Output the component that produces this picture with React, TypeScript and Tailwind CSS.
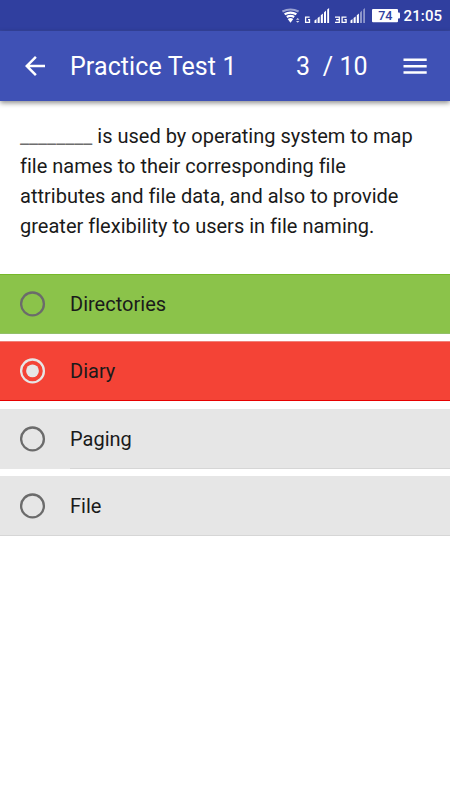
import React from 'react';
import clsx from 'clsx';

const options = [
  { label: 'Directories', state: 'correct' },
  { label: 'Diary', state: 'wrong' },
  { label: 'Paging', state: 'idle' },
  { label: 'File', state: 'last' },
];

const rowStyles: Record<string, string> = {
  correct: 'mt-[33px] bg-[#8bc34a] border-t-[#76b82a] border-b-[#92c068]',
  wrong: 'mt-[7px] bg-[#f44336] border-t-[#f08078] border-b-[#e60000]',
  idle: 'mt-[8px] bg-[#e6e6e6] border-t-[#e6e6e6] border-b-[#e6e6e6]',
  last: 'mt-[7px] bg-[#e6e6e6] border-t-[#e6e6e6] border-b-[#d6d6d6]',
};

const StatusBar = () => (
  <div className="flex h-[31px] justify-end bg-[#303f9f] border-b border-[#36459f]">
    <svg width="168" height="30" viewBox="0 0 168 30" className="shrink-0" fill="#fff">
      {/* wifi */}
      <g fill="none" stroke="#fff" strokeWidth="2.2">
        <path d="M0.4 11.6Q8.5 7.4 16.6 11.6" stroke="#9aa2d2" />
        <path d="M2.6 14.3Q8.5 11 14.4 14.3" />
        <path d="M4.8 17Q8.5 14.6 12.2 17" />
      </g>
      <path d="M5.7 18.9Q8.5 17.2 11.3 18.9L8.5 22.8Z" />
      <path d="M14 19.8L15.7 18L17.4 19.8ZM14 21L15.7 22.8L17.4 21Z" opacity=".8" />
      {/* first sim */}
      <path d="M27.6 17.1h-4v5.2h3.9v-2.6h-1.5" fill="none" stroke="#fff" strokeWidth="1.3" />
      <path d="M32.5 20.4L34.5 19V23H32.5ZM35.6 18L37.7 16.5V23H35.6ZM38.8 15.3L40.9 13.5V23H38.8ZM42 12.5L44 10.5V23H42ZM45.2 9.5L47.1 8V23H45.2Z" />
      {/* second sim */}
      <path d="M53 17.1h4.3v5.2H53M54 19.7h3M64.5 17.1h-4.4v5.2h4v-2.6h-1.7" fill="none" stroke="#fff" strokeWidth="1.3" />
      <path d="M68.5 20.4L70.5 19V23H68.5ZM71.6 18L73.7 16.5V23H71.6ZM74.8 15.3L76.9 13.5V23H74.8Z" />
      <path d="M78 12.5L80 10.5V23H78ZM81.2 9.5L83 8V23H81.2Z" fill="#8d96cb" />
      {/* battery */}
      <rect x="90" y="9" width="26" height="13.3" rx="1" />
      <rect x="115" y="12.5" width="3" height="6" rx="1" />
      <text x="103.3" y="20.2" textAnchor="middle" fontSize="12.5" fontWeight="500" fill="#303f9f" className="font-[Roboto,sans-serif]">74</text>
      <text x="121.6" y="21.4" fontSize="15" fontWeight="500" textLength="38.5" className="font-[Roboto,sans-serif]">21:05</text>
    </svg>
  </div>
);

const Radio = ({ checked }: { checked: boolean }) => (
  <svg width="26" height="26" viewBox="0 0 26 26" className="shrink-0" fill="none">
    <circle cx="12.5" cy="12.9" r="11.4" stroke={checked ? '#e6e6e6' : '#6b6b6b'} strokeWidth="2.3" />
    {checked && <circle cx="12.5" cy="12.9" r="6.4" fill="#e6e6e6" />}
  </svg>
);

const App = () => {
  return (
    <div className="flex min-h-screen flex-col overflow-hidden bg-white font-[Roboto,sans-serif]">
      <StatusBar />

      <header className="flex h-[70px] items-center bg-[#3f51b5] text-[25px] text-white shadow-[0_2px_5px_rgba(0,0,0,0.45)]">
        <svg width="20" height="20" viewBox="4 4 16 16" className="ml-[25px] shrink-0" fill="#fff">
          <path d="M20 11H7.83l5.59-5.59L12 4l-8 8 8 8 1.41-1.41L7.83 13H20v-2z" />
        </svg>
        <h1 className="ml-[25px] w-[226px] whitespace-pre pt-[2px] tracking-[0.1px]">Practice Test 1</h1>
        <div className="w-[107px] whitespace-pre pt-[2px] tracking-[0.1px]">3  / 10</div>
        <svg width="24" height="18" viewBox="0 0 24 18" className="shrink-0" fill="#fff">
          <path d="M0.5 1.5H23.7V4H0.5ZM0.5 7.9H23.7V10.4H0.5ZM0.5 14.3H23.7V16.8H0.5Z" />
        </svg>
      </header>

      <div className="mt-[20px] whitespace-pre pl-5 text-[20px] leading-[30px] tracking-[0.01px] text-[#1a1a1a]">
        <div className="flex">
          <span className="text-[#6e6e6e]">________</span>
          <span> is used by operating system to map</span>
        </div>
        <p>
          {`file names to their corresponding file
attributes and file data, and also to provide
greater flexibility to users in file naming.`}
        </p>
      </div>

      <div>
        {options.map((option) => (
          <div
            key={option.label}
            className={clsx('flex h-[60px] items-center border-y pl-[20px] text-[20px] text-[#1a1a1a]', rowStyles[option.state])}
          >
            <Radio checked={option.state === 'wrong'} />
            <span
              className={clsx(
                'ml-[24px] flex h-[60px] flex-1 items-center tracking-[0.01px]',
                option.state === 'idle' && 'border-b border-[#d6d6d6]'
              )}
            >
              {option.label}
            </span>
          </div>
        ))}
      </div>
    </div>
  );
};

export default App;
